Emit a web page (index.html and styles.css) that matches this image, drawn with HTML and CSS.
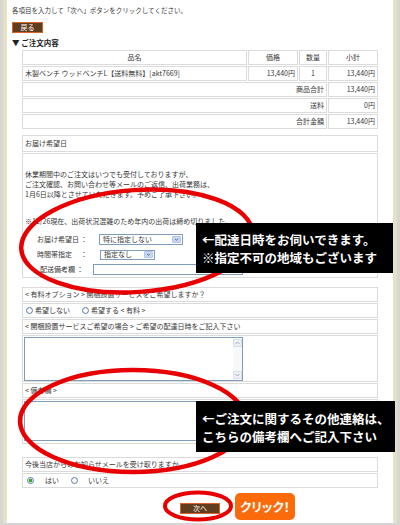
FILE: index.html
```html
<!DOCTYPE html>
<html lang="ja">
<head>
<meta charset="utf-8">
<title>ご注文内容</title>
<link rel="stylesheet" href="styles.css">
</head>
<body>
<div class="page">
  <div class="frame">
    <p class="intro">各項目を入力して「次へ」ボタンをクリックしてください。</p>
    <span class="btn btn-back">戻る</span>
    <h2 class="heading">▼ ご注文内容</h2>

    <div class="order">
      <div class="cell cell-center">品名</div>
      <div class="cell cell-center">価格</div>
      <div class="cell cell-center">数量</div>
      <div class="cell cell-center">小計</div>

      <div class="cell">木製ベンチ ウッドベンチL【送料無料】[akt7669]</div>
      <div class="cell cell-right">13,440円</div>
      <div class="cell cell-center">1</div>
      <div class="cell cell-right">13,440円</div>

      <div class="cell cell-right cell-span">商品合計</div>
      <div class="cell cell-right">13,440円</div>

      <div class="cell cell-right cell-span">送料</div>
      <div class="cell cell-right">0円</div>

      <div class="cell cell-right cell-span">合計金額</div>
      <div class="cell cell-right">13,440円</div>
    </div>

    <div class="box box-delivery">
      <div class="cell row-head">お届け希望日</div>
      <div class="cell delivery-body">
        <p class="notice">休業期間中のご注文はいつでも受付しておりますが、<br>ご注文確認、お問い合わせ等メールのご返信、出荷業務は、<br>1月6日以降とさせていただきます。予めご了承下さい。</p>
        <p class="notice notice-alert">※12/26現在、出荷状況混雑のため年内の出荷は締め切りました。</p>
        <div class="form">
          <div class="frow">
            <span class="flabel flabel-date">お届け希望日 ：</span>
            <span class="sel sel-date">特に指定しない<span class="sel-arrow"><svg width="9" height="7" viewBox="0 0 9 7"><path d="M2.5 2.5 L4.5 4.5 L6.5 2.5" fill="none" stroke="#4a5f8a" stroke-width="1.2"/></svg></span></span>
          </div>
          <div class="frow">
            <span class="flabel flabel-time">時間帯指定　 ：</span>
            <span class="sel sel-time">指定なし<span class="sel-arrow"><svg width="9" height="7" viewBox="0 0 9 7"><path d="M2.5 2.5 L4.5 4.5 L6.5 2.5" fill="none" stroke="#4a5f8a" stroke-width="1.2"/></svg></span></span>
          </div>
          <div class="frow">
            <span class="flabel flabel-note">配送備考欄 ：</span>
            <span class="field"></span>
          </div>
        </div>
      </div>
    </div>

    <div class="box box-option">
      <div class="cell row-head">&lt; 有料オプション &gt; 開梱設置サービスをご希望しますか？</div>
      <div class="cell row-head">
        <span class="radio radio-first"></span><span class="rlabel">希望しない</span>
        <span class="radio radio-second"></span><span class="rlabel">希望する &lt; 有料 &gt;</span>
      </div>
      <div class="cell row-head">&lt; 開梱設置サービスご希望の場合 &gt; ご希望の配達日時をご記入下さい</div>
      <div class="cell row-area row-area-1">
        <div class="textarea textarea-1">
          <span class="scroll"><span class="sarrow"><svg width="7" height="6" viewBox="0 0 7 6"><path d="M1.5 4 L3.5 2 L5.5 4" fill="none" stroke="#9aa8bd" stroke-width="1"/></svg></span><span class="sarrow"><svg width="7" height="6" viewBox="0 0 7 6"><path d="M1.5 2 L3.5 4 L5.5 2" fill="none" stroke="#9aa8bd" stroke-width="1"/></svg></span></span>
        </div>
      </div>
      <div class="cell row-head">&lt; 備考欄 &gt;</div>
      <div class="cell row-area row-area-2">
        <div class="textarea textarea-2"></div>
      </div>
    </div>

    <div class="box box-notify">
      <div class="cell row-head">今後当店からのお知らせメールを受け取りますか</div>
      <div class="cell row-head">
        <span class="radio radio-on radio-yes"></span><span class="rlabel rlabel-yes">はい</span>
        <span class="radio radio-no"></span><span class="rlabel rlabel-no">いいえ</span>
      </div>
    </div>

    <span class="btn btn-next">次へ</span>
  </div>

  <svg class="marks" width="400" height="525" viewBox="0 0 400 525">
    <ellipse cx="137" cy="241" rx="116" ry="51" transform="rotate(-4 137 241)" fill="none" stroke="#e80000" stroke-width="4.5"/>
    <ellipse cx="133" cy="421" rx="113" ry="51" fill="none" stroke="#e80000" stroke-width="4.5"/>
    <ellipse cx="198" cy="506" rx="33" ry="13.5" fill="none" stroke="#e80000" stroke-width="4"/>
  </svg>

  <div class="callout callout-1">←配達日時をお伺いできます。<br>※指定不可の地域もございます</div>
  <div class="callout callout-2">←ご注文に関するその他連絡は、<br>こちらの備考欄へご記入下さい</div>
  <div class="click-tag">クリック！</div>
</div>
</body>
</html>
```

FILE: styles.css
```css
* { box-sizing: border-box; }

html, body {
  margin: 0;
  padding: 0;
  background: #ffffff;
}

body {
  font-family: "Noto Sans CJK JP", "Noto Sans", sans-serif;
  font-size: 7px;
  line-height: 9px;
  color: #383838;
}

.page {
  position: relative;
  width: 400px;
  height: 525px;
  background: #d6d6d6;
  padding: 0 3px 2px 3px;
  overflow: hidden;
}

.frame {
  height: 100%;
  background: #ffffff;
  border-left: 4px solid #e8e1c4;
  border-right: 4px solid #e8e1c4;
  padding-top: 6px;
}

.intro {
  margin: 0 0 0 5px;
  font-size: 6.5px;
  line-height: 9px;
  white-space: nowrap;
}

.btn {
  display: block;
  height: 11px;
  background: #5f3d1d;
  border: 1px solid #d9622b;
  color: #ffffff;
  font-size: 7px;
  line-height: 9px;
  text-align: center;
}

.btn-back {
  width: 31px;
  margin: 7px 0 0 5px;
}

.btn-next {
  width: 40px;
  margin: 15px auto 0;
}

.heading {
  margin: 5px 0 0 5px;
  font-size: 7.5px;
  line-height: 10px;
  font-weight: bold;
  color: #222222;
}

.order {
  display: grid;
  grid-template-columns: 225px 50px 28px 50px;
  grid-auto-rows: 15px;
  gap: 1px;
  width: 356px;
  margin: 2px 0 0 15px;
}

.cell {
  border: 1px solid #dbdbdb;
  padding: 0 2px;
  display: flex;
  align-items: center;
  white-space: nowrap;
  background: #ffffff;
}

.cell-center { justify-content: center; }
.cell-right { justify-content: flex-end; }
.cell-span { grid-column: span 3; }

.box {
  display: flex;
  flex-direction: column;
  gap: 1px;
  width: 356px;
  margin-left: 15px;
}

.box-delivery { margin-top: 6px; }
.box-delivery .row-head { height: 17px; }

.row-head { height: 15px; }

.delivery-body {
  height: 125px;
  flex-direction: column;
  align-items: stretch;
  justify-content: flex-start;
}

.notice {
  margin: 0;
  padding-top: 15px;
  line-height: 10px;
}

.notice-alert {
  padding-top: 0;
  margin-top: 17px;
}

.form {
  display: flex;
  flex-direction: column;
  gap: 4px;
  margin-top: 8px;
}

.frow {
  display: flex;
  align-items: center;
  height: 11px;
  padding-left: 12px;
}

.flabel { white-space: pre; }
.flabel-date { width: 62px; }
.flabel-time { width: 63px; }
.flabel-note { width: 53px; margin-left: 3px; }

.sel {
  display: flex;
  align-items: center;
  height: 11px;
  border: 1px solid #7f9db9;
  background: #ffffff;
  padding-left: 3px;
  font-size: 7px;
}

.sel-date { width: 84px; }
.sel-time { width: 55px; height: 10px; }

.sel-arrow {
  display: flex;
  align-items: center;
  justify-content: center;
  width: 9px;
  height: 7px;
  margin-left: auto;
  margin-right: 1px;
  background: #c9d8f3;
  border: 1px solid #b4c6e8;
  border-radius: 1px;
}

.sel-arrow svg { display: block; }

.field {
  width: 150px;
  height: 11px;
  border: 1px solid #7f9db9;
  background: #ffffff;
}

.box-option { margin-top: 9px; }

.row-area {
  align-items: flex-start;
  padding: 1px 0 0 1px;
}

.row-area-1 { height: 47px; }
.row-area-2 { height: 45px; }

.textarea {
  display: flex;
  justify-content: flex-end;
  width: 219px;
  border: 1px solid #7f9db9;
  background: #ffffff;
}

.textarea-1 { height: 44px; }
.textarea-2 { height: 40px; }

.scroll {
  display: flex;
  flex-direction: column;
  justify-content: space-between;
  width: 9px;
  height: 100%;
  background: #f7f8fa;
  padding: 1px 0;
}

.sarrow {
  display: flex;
  align-items: center;
  justify-content: center;
  width: 9px;
  height: 8px;
  background: #eef1f6;
  border: 1px solid #d6dde8;
  border-radius: 1px;
}

.sarrow svg { display: block; }

.radio {
  flex: none;
  width: 7px;
  height: 7px;
  border-radius: 50%;
  border: 1px solid #5e7ea9;
  background: radial-gradient(circle, #ffffff 0 1.5px, #e4eaf2 3.5px);
}

.radio-on {
  background: radial-gradient(circle, #33a532 0 1.6px, #ffffff 2.2px, #e4eaf2 3.5px);
}

.radio-first { margin-left: 1px; }
.radio-second { margin-left: 12px; }
.rlabel { margin-left: 2px; }

.radio-yes { margin-left: 2px; }
.rlabel-yes { margin-left: 11px; }
.radio-no { margin-left: 12px; }
.rlabel-no { margin-left: 10px; }

.box-notify { margin-top: 13px; }

.marks {
  position: absolute;
  left: 0;
  top: 0;
  pointer-events: none;
}

.callout {
  position: absolute;
  background: #000000;
  color: #ffffff;
  font-family: "Noto Sans CJK JP", sans-serif;
  font-weight: bold;
  font-size: 12.5px;
  white-space: nowrap;
  padding-left: 6px;
}

.callout-1 {
  left: 196px;
  top: 223px;
  width: 197px;
  height: 50px;
  line-height: 18px;
  padding-top: 7.5px;
}

.callout-2 {
  left: 196px;
  top: 401px;
  width: 199px;
  height: 51px;
  line-height: 18px;
  padding-top: 9px;
}

.click-tag {
  position: absolute;
  left: 235px;
  top: 493px;
  width: 60px;
  height: 27px;
  border-radius: 5px;
  background: #fb6b0c;
  color: #ffffff;
  font-family: "Noto Sans CJK JP", sans-serif;
  font-weight: bold;
  font-size: 12.5px;
  font-feature-settings: "palt";
  display: flex;
  align-items: center;
  justify-content: center;
  white-space: nowrap;
}
```
